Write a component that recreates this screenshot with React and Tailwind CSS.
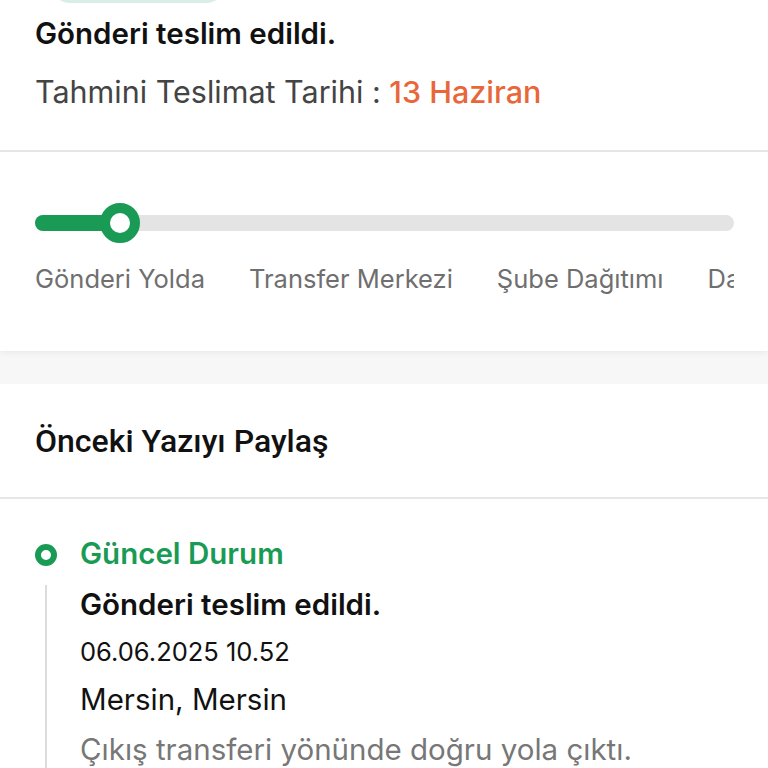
import React from "react";

export default function App() {
  const steps = ["Gönderi Yolda", "Transfer Merkezi", "Şube Dağıtımı", "Dağıtımda"];
  return (
    <div className="w-[768px] h-[768px] overflow-hidden bg-[#f7f7f7]" style={{ fontFamily: "Inter, 'Noto Sans', sans-serif" }}>
      {/* top card */}
      <div className="bg-white shadow-[0_2px_6px_rgba(0,0,0,0.06)]">
        <div className="px-[35px] pb-[40px]">
          <div className="ml-[15px] w-[176px] h-[40px] -mt-[37px] rounded-full bg-[#d9efe6]" />
          <div className="mt-[12px] text-[29.5px] leading-[36px] font-semibold text-[#111]">Gönderi teslim edildi.</div>
          <div className="mt-[23px] text-[30.5px] leading-[36px] text-[#444]">
            Tahmini Teslimat Tarihi : <span className="font-medium text-[#e8673a]">13 Haziran</span>
          </div>
        </div>
        <div className="h-[2px] bg-[#e6e6e6]" />
        <div className="pl-[35px] pr-[34px] pt-[63px] pb-[56px]">
          <div className="relative h-[16px] rounded-full bg-[#e4e4e4]">
            <div className="absolute left-0 top-0 h-[16px] w-[90px] rounded-full bg-[#1a9b55]" />
            <div className="absolute left-[65px] top-[-12px] w-[40px] h-[40px] rounded-full border-[10px] border-[#1a9b55] bg-white" />
          </div>
          <div className="mt-[32px] flex gap-[44px] overflow-hidden whitespace-nowrap text-[25.5px] leading-[32px] text-[#6f6f6f]">
            {steps.map((s) => (
              <span key={s} className="shrink-0">{s}</span>
            ))}
          </div>
        </div>
      </div>
      <div className="h-[33px]" />
      {/* second card */}
      <div className="bg-white">
        <div className="px-[35px] pt-[38px] pb-[37px] text-[32px] leading-[38px] font-medium text-[#111]" style={{ fontFamily: "Roboto, sans-serif" }}>
          Önceki Yazıyı Paylaş
        </div>
        <div className="h-[2px] bg-[#e6e6e6]" />
        <div className="pl-[35px] pt-[36px]">
          <div className="flex items-center gap-[23px]">
            <div className="w-[22px] h-[22px] mt-[4px] rounded-full border-[6px] border-[#1a9b55]" />
            <div className="text-[29.5px] leading-[36px] font-semibold text-[#1a9b55]">Güncel Durum</div>
          </div>
          <div className="flex">
            <div className="ml-[10px] w-[2px] mt-[14px] h-[300px] bg-[#dcdcdc]" />
            <div className="ml-[33px] pt-[15px]">
              <div className="text-[29.5px] leading-[36px] font-semibold text-[#111]">Gönderi teslim edildi.</div>
              <div className="mt-[14px] text-[25.5px] leading-[32px] text-[#111]">06.06.2025 10.52</div>
              <div className="mt-[13px] text-[29.5px] leading-[36px] text-[#111]">Mersin, Mersin</div>
              <div className="mt-[14px] text-[29.5px] leading-[36px] text-[#777] whitespace-nowrap">Çıkış transferi yönünde doğru yola çıktı.</div>
            </div>
          </div>
        </div>
      </div>
    </div>
  );
}
